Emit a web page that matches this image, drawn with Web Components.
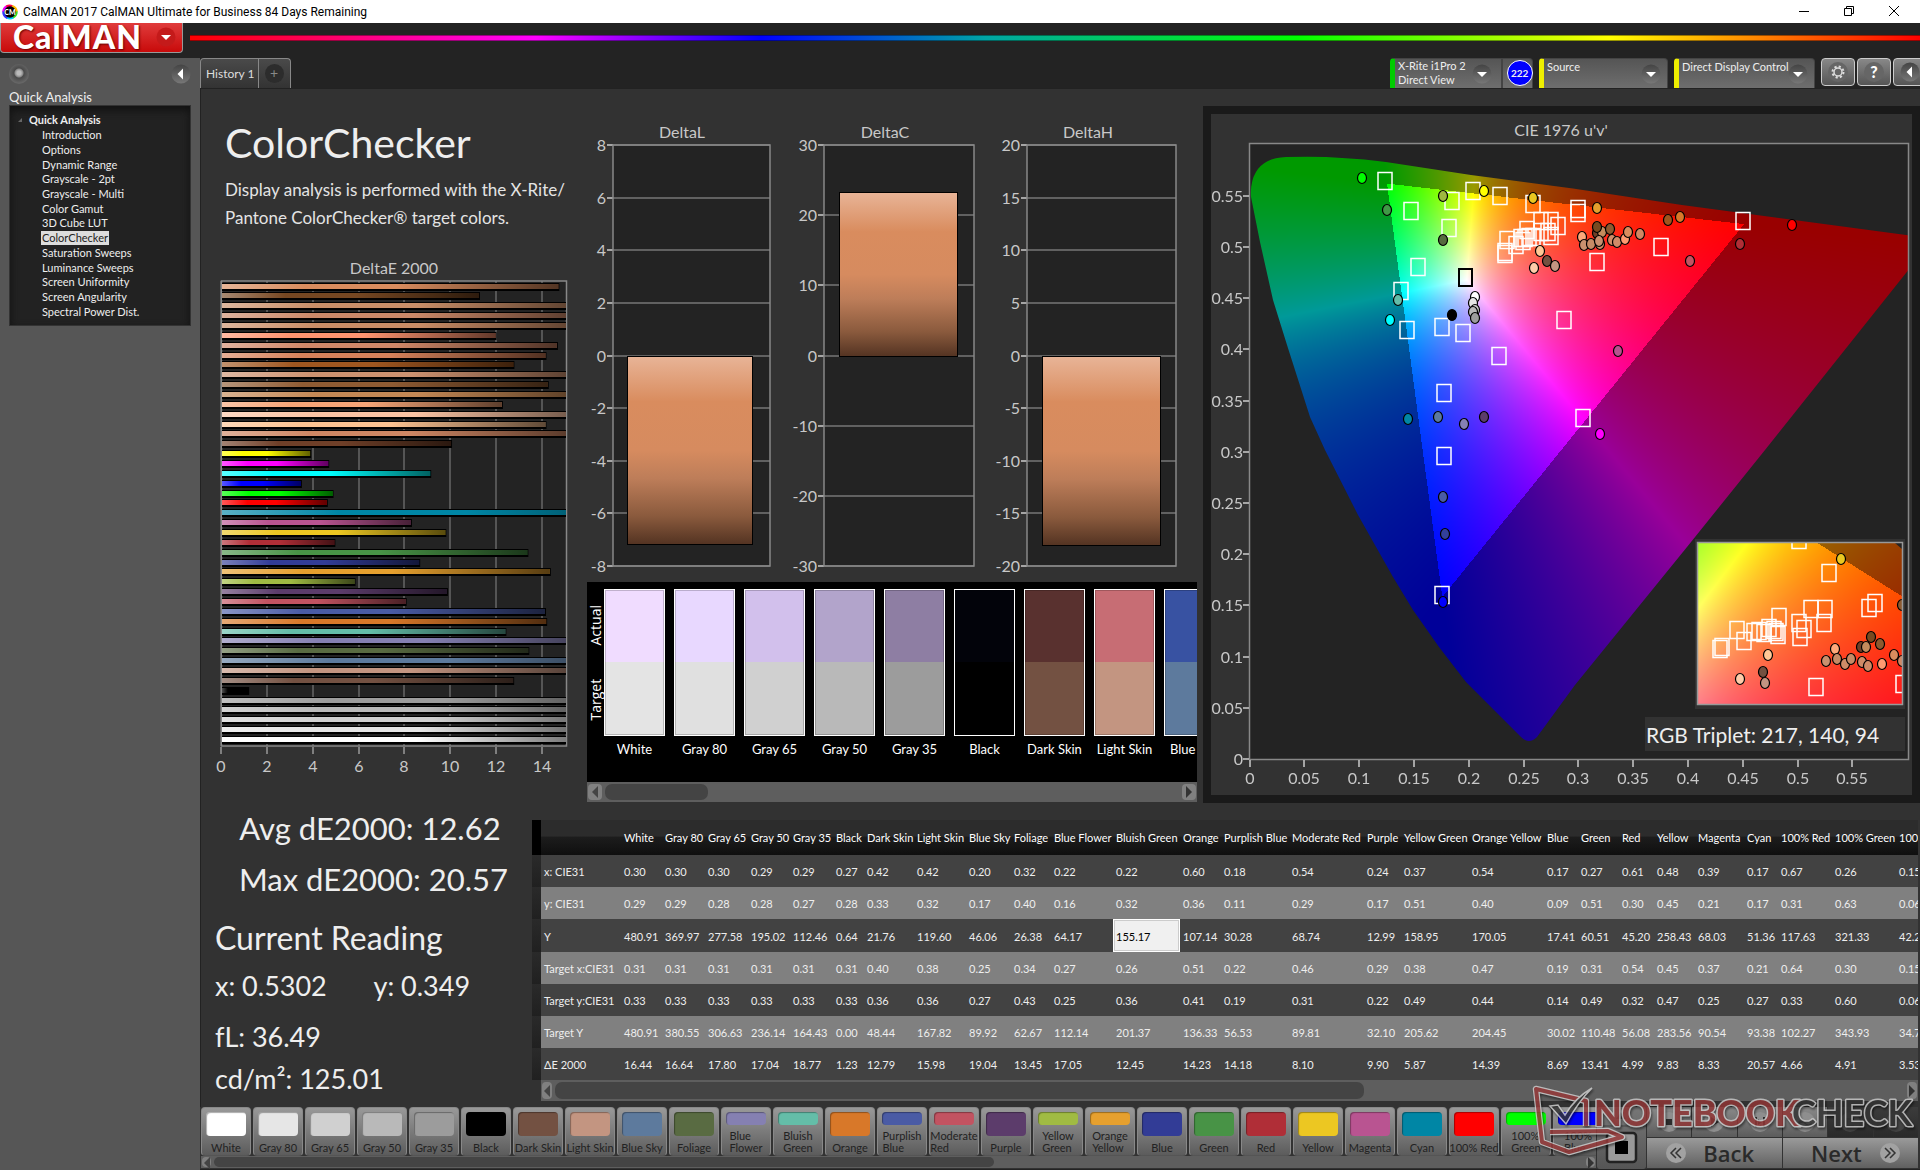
<!DOCTYPE html>
<html lang="en">
<head>
<meta charset="utf-8">
<title>CalMAN 2017</title>
<style>
html,body{margin:0;height:100%;background:#232323;overflow:hidden}
</style>
</head>
<body>
<cal-app></cal-app>
<script>
const FONT = 'Lato,"Open Sans",sans-serif';
const base = `*{box-sizing:border-box}button,select{font:inherit;color:inherit;border:0;padding:0;margin:0;background:none}`;
function define(name, css, html, after) {
  customElements.define(name, class extends HTMLElement {
    connectedCallback() {
      if (this.shadowRoot) return;
      const root = this.attachShadow({mode: 'open'});
      root.innerHTML = `<style>${base}${css}</style>` + (typeof html === 'function' ? html(this) : html);
      if (after) after(root, this);
    }
  });
}

/* Shared patch list: name, colour, x, y, Y, target x, target y, target Y, dE, column width */
const patches = [
  ['White','#ffffff','0.30','0.29','480.91','0.31','0.33','480.91','16.44',41],
  ['Gray 80','#e6e6e6','0.30','0.29','369.97','0.31','0.33','380.55','16.64',43],
  ['Gray 65','#d0d0d0','0.30','0.28','277.58','0.31','0.33','306.63','17.80',43],
  ['Gray 50','#b9b9b9','0.29','0.28','195.02','0.31','0.33','236.14','17.04',42],
  ['Gray 35','#9c9c9c','0.29','0.27','112.46','0.31','0.33','164.43','18.77',43],
  ['Black','#000000','0.27','0.28','0.64','0.31','0.33','0.00','1.23',31],
  ['Dark Skin','#735142','0.42','0.33','21.76','0.40','0.36','48.44','12.79',50],
  ['Light Skin','#c39581','0.42','0.32','119.60','0.38','0.36','167.82','15.98',52],
  ['Blue Sky','#5d7a9d','0.20','0.17','46.06','0.25','0.27','89.92','19.04',45],
  ['Foliage','#596b42','0.32','0.40','26.38','0.34','0.43','62.67','13.45',40],
  ['Blue Flower','#8580b2','0.22','0.16','64.17','0.27','0.25','112.14','17.05',62],
  ['Bluish Green','#64bda8','0.22','0.32','155.17','0.26','0.36','201.37','12.45',67],
  ['Orange','#d87829','0.60','0.36','107.14','0.51','0.41','136.33','14.23',41],
  ['Purplish Blue','#4a5ba5','0.18','0.11','30.28','0.22','0.19','56.53','14.18',68],
  ['Moderate Red','#c25361','0.54','0.29','68.74','0.46','0.31','89.81','8.10',75],
  ['Purple','#5c3c6b','0.24','0.17','12.99','0.29','0.22','32.10','9.90',37],
  ['Yellow Green','#a0bb43','0.37','0.51','158.95','0.38','0.49','205.62','5.87',68],
  ['Orange Yellow','#e6a02e','0.54','0.40','170.05','0.47','0.44','204.45','14.39',75],
  ['Blue','#323c96','0.17','0.09','17.41','0.19','0.14','30.02','8.69',34],
  ['Green','#489346','0.27','0.51','60.51','0.31','0.49','110.48','13.41',41],
  ['Red','#b02e37','0.61','0.30','45.20','0.54','0.32','56.08','4.99',35],
  ['Yellow','#ecc722','0.48','0.45','258.43','0.45','0.47','283.56','9.83',41],
  ['Magenta','#b95491','0.39','0.21','68.03','0.37','0.25','90.54','8.33',49],
  ['Cyan','#0086a5','0.17','0.17','51.36','0.21','0.27','93.38','20.57',34],
  ['100% Red','#ff0000','0.67','0.31','117.63','0.64','0.33','102.27','4.66',54],
  ['100% Green','#00ff00','0.26','0.63','321.33','0.30','0.60','343.93','4.91',64],
  ['100% Blue','#0000ff','0.15','0.06','42.27','0.15','0.06','34.71','3.53',60]
];

define('round-arrow', `:host{display:inline-flex;flex:none;width:20px;height:20px}svg{display:block;width:100%}`,
  el => `<svg viewBox="0 0 20 20"><defs><linearGradient id="g" x2="0" y2="1"><stop stop-color="#444"/><stop offset="1" stop-color="#777"/></linearGradient></defs>
  <circle cx="10" cy="10" r="9.5" fill="${el.getAttribute('fill') || 'url(#g)'}"/><path fill="#fff" d="${el.getAttribute('dir') === 'left' ? 'M12 4.500v11L6.500 10z' : 'M5 8h10l-5 5z'}"/></svg>`);

define('title-bar', `
  :host{display:flex;align-items:center;height:23px;flex:none;background:#fff;color:#000;font:12px/20px Roboto,sans-serif;padding:0 18px 0 2px}
  .t{margin-left:5px;flex:1}svg{display:block}.w{display:flex;gap:29px;padding-bottom:2px}
  button{width:16px;height:16px}`, `
  <svg width="16" height="16" viewBox="0 0 16 16"><g fill="none" stroke-width="3"><path stroke="#e0f" d="M1.700 8A6.300 6.300 0 0 1 5 2.500"/><path stroke="#f04" d="M4.500 2.700a6.300 6.300 0 0 1 6 0"/><path stroke="#fb0" d="M10 2.300A6.300 6.300 0 0 1 14.300 8"/><path stroke="#3d2" d="M14.300 7.500a6.300 6.300 0 0 1-4 5.800"/><path stroke="#0cf" d="M11 13.300a6.300 6.300 0 0 1-6 0"/><path stroke="#33f" d="M5.500 13.500A6.300 6.300 0 0 1 1.700 7.500"/></g><circle cx="8" cy="8" r="5.800"/><text x="8" y="10.500" font-family="Lato" font-weight="900" font-size="7" fill="#fff" text-anchor="middle">CM</text></svg>
  <span class="t">CalMAN 2017 CalMAN Ultimate for Business 84 Days Remaining</span>
  <span class="w"><button aria-label="Minimize"><svg width="16" height="16"><path d="M3 8.500h10" stroke="#000"/></svg></button>
  <button aria-label="Restore"><svg width="16" height="16" fill="none" stroke="#000"><path d="M3.500 5.500h7v7h-7zM5.500 5.500v-2h7v7h-2"/></svg></button>
  <button aria-label="Close"><svg width="16" height="16" fill="none" stroke="#000"><path d="M3 3l10 10M13 3L3 13"/></svg></button></span>`);

define('brand-bar', `
  :host{display:flex;height:35px;flex:none;gap:7px}
  button{width:183px;height:30px;border:1px solid #999;border-top:0;border-radius:0 0 4px 4px;background:linear-gradient(#e03c3c,#c80a0a);display:flex;align-items:center;justify-content:space-between;padding:0 6px 2px 12px;color:#fff;font:900 32px/28px Lato,sans-serif;letter-spacing:1px;text-shadow:1px 1px 2px #600}
  i{flex:1;height:6px;margin-top:12px;background:linear-gradient(90deg,#f00,#f0f 20%,#00f 33%,#00a5a5 46%,#0f0 64%,#ff0 82%,#f00);border:solid #0006;border-width:1px 0}`,
  `<button>CalMAN<round-arrow fill="#c41a1a"></round-arrow></button><i></i>`);

define('device-bar', `
  :host{display:flex;height:30px;font:11px/14px Lato,sans-serif;color:#eee}
  .tabs{display:flex;flex:1;font-size:12px}
  .tabs button{height:30px;border:1px solid #888;border-bottom:0;background:linear-gradient(#4a4a4a,#333);color:#ddd;padding:0 3px 0 5px}
  .tabs button:first-child{border-radius:4px 0 0 0}.tabs button:last-child{border-radius:0 4px 0 0;border-left:0;padding:0 6px;color:#888}
  .tabs i{display:block;width:19px;height:19px;border-radius:50%;background:#2c2c2c;font:14px/18px Lato}
  .dev{display:grid;border-radius:4px 4px 0 0;background:linear-gradient(#555,#6e6e6e);border:1px solid #444;border-width:1px 1px 0;border-left:5px solid #ee0;margin-right:6px}
  .dev>*{grid-area:1/1}.dev round-arrow{justify-self:end;margin:5px 6px 0;pointer-events:none}
  .dev select{appearance:none;align-self:start;height:16px;width:100%;padding:0 0 0 3px;outline:0}
  .src{width:129px}.ddc{width:141px;margin-right:6px}
  .meter{width:143px;display:flex;border-left-color:#0c0}
  .meter button{flex:1;display:flex;text-align:left;padding-left:3px;justify-content:space-between;white-space:nowrap}
  .meter round-arrow{margin-right:9px}
  .meter b{width:37px;border-left:2px solid #444;padding:1px 4px 0}
  .meter b i{display:block;width:26px;height:26px;border-radius:50%;background:#00f;border:1px solid #fff;text-align:center;font:700 10px/24px Lato}
  .ic{display:flex;gap:2px;width:99px;overflow:hidden}.ic button{flex:none;width:34px;height:28px;border:1px solid #ccc;border-radius:4px;background:linear-gradient(#888,#555);display:grid;place-items:center}
  .ic svg{display:block}`, `
  <div class="tabs"><button>History 1</button><button aria-label="Add tab"><i>+</i></button></div>
  <div class="dev meter"><button><span>X-Rite i1Pro 2<br>Direct View</span><round-arrow></round-arrow></button><b><i>222</i></b></div>
  <div class="dev src"><select aria-label="Source"><option>Source</option></select><round-arrow></round-arrow></div>
  <div class="dev ddc"><select aria-label="Direct Display Control"><option>Direct Display Control</option></select><round-arrow></round-arrow></div>
  <div class="ic"><button aria-label="Settings"><svg width="20" height="20" viewBox="0 0 20 20"><circle cx="10" cy="10" r="10" fill="#666"/><g fill="none" stroke="#ddd"><circle cx="10" cy="10" r="4" stroke-width="1.500"/><circle cx="10" cy="10" r="5.500" stroke-width="2" stroke-dasharray="2.200 2.120"/></g></svg></button>
  <button aria-label="Help"><svg width="20" height="20" viewBox="0 0 20 20"><circle cx="10" cy="10" r="10" fill="#666"/><text x="10" y="15.500" text-anchor="middle" font-family="Lato" font-weight="900" font-size="16" fill="#fff">?</text></svg></button>
  <button aria-label="Collapse"><round-arrow dir="left"></round-arrow></button></div>`);

define('workflow-tree', `
  :host{display:block;width:200px;flex:none;background:#565656;color:#eee;font:11px/14px Lato,sans-serif;padding:6px 9px 0}
  .top{display:flex;justify-content:space-between;height:20px;margin-bottom:5px}
  .dot{width:20px;height:20px;border-radius:50%;background:radial-gradient(circle at 50% 45%,#bbb 0 2px,#888 4px,#4a4a4a 5px,#666 10px)}
  h2{font:13px/16px Lato,sans-serif;margin:0}
  nav{height:221px;background:#222;border:1px solid #333;box-shadow:inset 0 4px 8px #111;padding:7px 0 6px 19px;display:flex;flex-direction:column}
  b{flex:1;display:flex;align-items:center}b svg{margin:0 7px 0 -11px}a{flex:1;color:inherit;text-decoration:none;padding-left:13px;display:flex;align-items:center}
  a[aria-current] span{background:#ddd;color:#222;margin-left:-1px;padding:0 1px}`, `
  <div class="top"><span class="dot"></span><button aria-label="Collapse panel"><round-arrow dir="left"></round-arrow></button></div>
  <h2>Quick Analysis</h2>
  <nav><b><svg width="4" height="4"><path d="M4 0v4H0z" fill="#666"/></svg>Quick Analysis</b>${['Introduction','Options','Dynamic Range','Grayscale - 2pt','Grayscale - Multi','Color Gamut','3D Cube LUT','ColorChecker','Saturation Sweeps','Luminance Sweeps','Screen Uniformity','Screen Angularity','Spectral Power Dist.'].map(t => `<a href="#"${t === 'ColorChecker' ? ' aria-current="page"' : ''}><span>${t}</span></a>`).join('')}</nav>`);

define('deltae-chart', `:host{display:block;font:16px ${FONT}}svg{display:block;width:100%}text{fill:#c8c8c8;text-anchor:middle}`, () => {
  const bars = [['#d98c5e',14.76],['#764722',11.3],['#c98e68',16.4],['#cb8868',16.2],['#c98c66',16.6],['#ff9470',12.02],['#d08768',14.7],['#d6815a',14.2],['#9f5620',12.8],['#cd9270',16],['#8f5b33',14.3],['#c48855',16.5],['#f6a577',12.3],['#fbc4a4',16.3],['#fdc392',14.2],['#cf8764',15.8],['#6f3f28',10.08],['#ffff00',3.93],['#ff00ff',4.72],['#00ffff',9.17],['#0000ff',3.53],['#00ff00',4.91],['#ff0000',4.66],['#0086a5',20.57],['#b95491',8.33],['#ecc722',9.83],['#b02e37',4.99],['#489346',13.41],['#323c96',8.69],['#e6a02e',14.39],['#a0bb43',5.87],['#5c3c6b',9.9],['#c25361',8.1],['#4a5ba5',14.18],['#d87829',14.23],['#64bda8',12.45],['#8580b2',17.05],['#596b42',13.45],['#5d7a9d',19.04],['#c39581',15.98],['#735142',12.79],['#000000',1.23],['#9c9c9c',18.77],['#b9b9b9',17.04],['#d0d0d0',17.8],['#e6e6e6',16.64],['#ffffff',16.44]];
  let s = `<svg viewBox="201 255 386 530"><defs><linearGradient id="s"><stop stop-color="#fff" stop-opacity=".36"/><stop offset=".25" stop-color="#fff" stop-opacity="0"/><stop offset=".26" stop-opacity="0"/><stop offset=".52" stop-opacity="0"/><stop offset="1" stop-opacity=".62"/></linearGradient><clipPath id="c"><rect x="222" y="281" width="344" height="465"/></clipPath></defs>
  <text x="394" y="274">DeltaE 2000</text><rect x="221.500" y="281" width="345" height="465" fill="#232323" stroke="#888" stroke-width="1.500"/>`;
  for (let v = 0; v < 15; v += 2) { const x = Math.round(221 + v * 22.92); s += `<path d="M${x} 281v465" stroke="#888"/><path d="M${x} 747v7" stroke="#ccc"/><text x="${x}" y="772">${v}</text>`; }
  s += '<g clip-path="url(#c)">';
  bars.forEach(([c, v], i) => { const y = Math.round(282.5 + i * 9.86), w = v * 22.92; s += `<rect x="221" y="${y}" width="${w}" height="8"/><rect x="221" y="${y + 1}" width="${w - 1}" height="5" fill="${c}"/><rect x="221" y="${y + 1}" width="${w - 1}" height="5" fill="url(#s)"/>`; });
  return s + '</g></svg>';
});

define('delta-charts', `:host{display:block;font:16px ${FONT}}svg{display:block;width:100%}text{fill:#c8c8c8}`, () => {
  let s = '<svg viewBox="587 106 616 476"><defs><linearGradient id="b" x2="0" y2="1"><stop stop-color="#e8b497"/><stop offset=".24" stop-color="#d98c5e"/><stop offset=".5" stop-color="#d68b5f"/><stop offset=".65" stop-color="#bd7d59"/><stop offset=".85" stop-color="#8a5a3d"/><stop offset="1" stop-color="#533322"/></linearGradient></defs>';
  [['DeltaL', 613, 770, 8, 2, 627, 126, 356, 189], ['DeltaC', 824, 974, 30, 10, 839, 119, 192, 165], ['DeltaH', 1027, 1176, 20, 5, 1042, 119, 356, 190]].forEach(([t, x0, x1, m, st, bx, bw, by, bh]) => {
    s += `<text x="${t === 'DeltaL' ? 682 : t === 'DeltaC' ? 885 : 1088}" y="138" text-anchor="middle">${t}</text><rect x="${x0}" y="145" width="${x1 - x0}" height="421" fill="#232323"/>`;
    for (let v = m; v >= -m; v -= st) { const y = Math.round(145 + (m - v) * 210.5 / m); s += `<path d="M${x0} ${y}H${x1}" stroke="#777" stroke-width="1.500"/><path d="M${x0 - 6} ${y}h6" stroke="#ccc" stroke-width="1.500"/><text x="${x0 - 7}" y="${y + 6}" text-anchor="end">${v}</text>`; }
    s += `<path d="M${x0} 145H${x1}V566H${x0}z" fill="none" stroke="#888" stroke-width="1.500"/><rect x="${bx + .5}" y="${by + .5}" width="${bw - 1}" height="${bh - 1}" fill="url(#b)" stroke="#000"/>`;
  });
  return s + '</svg>';
});

define('scroll-strip', `
  :host{display:flex;align-items:stretch;background:#5e5e5e;padding:2px 1px;height:20px;flex:none}
  button{width:var(--b,14px);border-radius:4px;background:#808080;display:grid;place-items:center}svg{display:block}
  .track{flex:1;margin:0 3px}.thumb{height:100%;border-radius:7px;background:#444}`,
  el => `<button aria-label="Scroll left"><svg width="6" height="12"><path d="M6 0v12L0 6z" fill="#444"/></svg></button><div class="track"><div class="thumb" style="width:${el.getAttribute('thumb')}"></div></div><button aria-label="Scroll right"><svg width="6" height="12"><path d="M0 0v12l6-6z" fill="#333"/></svg></button>`);

define('swatch-strip', `
  :host{display:flex;flex-direction:column;margin-right:6px;color:#fff;font:13px/20px ${FONT}}
  .view{display:flex;height:200px;background:#000;overflow:hidden;padding-top:7px}
  .side{width:17px;flex:none;height:147px;display:flex;flex-direction:column;font:500 14px/17px "Open Sans",sans-serif}
  .side span{flex:1;writing-mode:vertical-rl;rotate:180deg;text-align:center}
  figure{margin:0 9px 0 0;width:61px;flex:none;text-align:center;white-space:nowrap}
  figure div{height:147px;border:1px solid #fff;margin-bottom:3px;box-shadow:inset 0 0 0 1px #0003}`,
  () => { const act = ['#f0dcff','#e8d8ff','#d2c0ec','#b2a4cb','#8e7ea3','#02030a','#59312f','#c76d74','#3852a2']; const tgt = ['#e4e4e4','#e0e0e0','#d0d0d0','#b9b9b9','#9c9c9c','#000','#735142','#c39581','#5d7a9d'];
  return `<div class="view"><div class="side"><span>Actual</span><span>Target</span></div>${act.map((a, i) => `<figure><div style="background:linear-gradient(${a} 50%,${tgt[i]} 50%)"></div><figcaption>${patches[i][0]}</figcaption></figure>`).join('')}</div><scroll-strip thumb="18%"></scroll-strip>`; });

/* Chromaticity colouring shared by the main diagram and its magnifier */
function rgbOf(x, y) {
  const X = x / y, Z = (1 - x - y) / y;
  const c = [3.2406 * X - 1.5372 - .4986 * Z, -.9689 * X + 1.8758 + .0415 * Z, .0557 * X - .204 + 1.057 * Z];
  const inside = Math.min(...c) >= 0, m = Math.max(...c), k = inside ? 255 : 153;
  return c.map(v => Math.max(0, v) / m * k);
}
function paint(canvas, toXY, clip) {
  const w = canvas.width, h = canvas.height, tmp = document.createElement('canvas');
  tmp.width = w; tmp.height = h;
  const t = tmp.getContext('2d'), img = t.createImageData(w, h);
  for (let j = 0, p = 0; j < h; j++) for (let i = 0; i < w; i++, p += 4) {
    const [x, y] = toXY(i, j), c = rgbOf(x, y);
    img.data[p] = c[0]; img.data[p + 1] = c[1]; img.data[p + 2] = c[2]; img.data[p + 3] = 255;
  }
  t.putImageData(img, 0, 0);
  const g = canvas.getContext('2d');
  if (clip) g.clip(new Path2D(clip));
  g.drawImage(tmp, 0, 0);
}

define('cie-chart', `
  :host{display:block;border:8px solid #1a1a1a;background:#323232;font:16px ${FONT}}
  svg{display:block;width:100%}canvas{display:block}text{fill:#c8c8c8}`, () => {
  const X = x => Math.round(1200 + x / 2.178), Y = y => Math.round(100 + y / 3), Y7 = y => Math.round(450 + y / 3);
  const sq = (x, y) => `<rect x="${x - 7}" y="${y - 8.5}" width="14" height="17"/>`;
  const el = (x, y, c) => `<ellipse cx="${x}" cy="${y}" rx="4.500" ry="5.500" fill="${c}"/>`;
  const squares = [[404,243],[459,334],[548,304],[594,272],[654,289],[543,385],[725,313],[823,328],[823,340],[475,502],[437,574],[450,691],[527,681],[572,700],[652,768],[792,661],[865,487],[1003,442],[1183,364],[532,880],[835,955],[532,1068],[527,1486]].map(p => sq(X(p[0]), Y(p[1]))).join('')
   + [[75,187],[75,191],[80,150],[108,166],[140,121],[122,145],[135,144],[148,142],[160,142],[128,152],[183,94],[214,92],[235,109],[205,126],[214,139],[182,127]].map(p => sq(Math.round(1480 + p[0] / 3), Math.round(190 + p[1] / 3))).join('');
  const dots = [[352,234,'#0f0'],[407,329,'#3f9a46'],[529,288,'#9fb840'],[618,272,'#ff0'],[725,294,'#ebc820'],[865,324,'#e5a02d'],[529,420,'#566b3e'],[1019,359,'#a0551e'],[1045,351,'#d97829'],[1290,375,'#f00'],[1177,432,'#b02e36'],[1067,483,'#c35363'],[740,452,'#ffc896'],[755,483,'#735040'],[774,498,'#c39582'],[728,504,'#ffccaa'],[431,600,'#63bda9'],[414,660,'#0ff'],[600,592,'#fff'],[594,609,'#e5e5e5'],[600,630,'#ccc'],[595,636,'#b8b8b8'],[600,655,'#9c9c9c'],[549,645,'#000'],[911,753,'#b7528f'],[453,957,'#0086a5'],[518,951,'#5c7a9e'],[575,972,'#8580b3'],[618,951,'#5c3c6b'],[871,1002,'#f0f'],[529,1192,'#4a5ba5'],[533,1302,'#33409a'],[529,1505,'#00f']].map(p => el(X(p[0]), Y(p[1]), p[2])).join('')
   + [[350,130,'#6f3f28'],[306,141,'#ffa87a'],[365,127,'#c48b5c'],[352,112,'#784a20'],[390,116,'#8c5a30'],[311,166,'#c9916f'],[332,161,'#c68b66'],[360,163,'#d08c68'],[357,152,'#c99070'],[396,150,'#cf8c68'],[411,156,'#cf8b68'],[436,147,'#ff9a70'],[444,126,'#d98c5e'],[480,132,'#d08764']].map(p => el(Math.round(1480 + p[0] / 3), Math.round(190 + p[1] / 3), p[2])).join('');
  const isq = [[1304,270],[1371,368],[1470,458],[1457,474],[1330,478],[1362,478],[1360,519],[1304,519],[1316,536],[1307,560],[1262,500],[1250,540],[1240,535],[1255,546],[1228,550],[1218,542],[1206,545],[1170,540],[1185,574],[1136,592],[1133,596],[1258,554],[1342,712],[1531,703]].map(p => sq(X(p[0]), Y7(p[1]))).join('');
  const idot = [[1396,327,'#ebc820'],[1530,464,'#8c5a30'],[1461,560,'#784a20'],[1482,581,'#8c5a30'],[1439,591,'#6f3f28'],[1451,591,'#c48b5c'],[1384,597,'#ffa87a'],[1363,632,'#c9916f'],[1387,628,'#c68b66'],[1405,643,'#cf8c68'],[1418,628,'#c68b66'],[1441,636,'#cf8c68'],[1455,648,'#d08c68'],[1485,642,'#ff9a70'],[1512,615,'#d98c5e'],[1530,632,'#d08764'],[1237,614,'#ffc896'],[1226,665,'#735040'],[1231,699,'#c39582'],[1176,687,'#ffccaa']].map(p => el(X(p[0]), Y7(p[1]), p[2])).join('');
  let ax = '';
  for (let i = 0; i <= 11; i++) {
    const x = Math.round(1249.5 + i * 54.8), y = Math.round(759 - i * 51.2), l = String(i * 5 / 100);
    ax += `<path d="M${x} 760v7M${1243} ${y}h6" stroke="#ccc" stroke-width="1.500"/><text x="${x}" y="784" text-anchor="middle">${l}</text><text x="1243" y="${y + 6}" text-anchor="end">${l}</text>`;
  }
  return `<svg viewBox="1211 114 701 681"><defs><clipPath id="i"><rect x="1698" y="543" width="204" height="161"/></clipPath></defs>
  <text x="1561" y="136" text-anchor="middle">CIE 1976 u'v'</text>
  <rect x="1250" y="144" width="658" height="615" fill="#232323"/>
  <foreignObject x="1250" y="144" width="658" height="614"><canvas id="main" width="658" height="614"></canvas></foreignObject>
  <rect x="1249.500" y="143.500" width="659" height="616" fill="none" stroke="#888" stroke-width="1.500"/>${ax}
  <g fill="none" stroke="#fff" stroke-width="1.500">${squares}<rect x="1459" y="269" width="13" height="17" stroke="#000" stroke-width="2"/></g>
  <g stroke="#000" stroke-width="1.200">${dots}</g>
  <rect x="1695" y="539" width="210" height="170" fill="#323232"/>
  <foreignObject x="1698" y="543" width="204" height="161"><canvas id="zoom" width="204" height="161"></canvas></foreignObject>
  <g clip-path="url(#i)"><path d="M1895 543h7v6z" fill="#232323"/><g fill="none" stroke="#fff" stroke-width="1.500">${isq}</g><g stroke="#000" stroke-width="1.200">${idot}</g></g>
  <rect x="1697.500" y="542.500" width="205" height="162" fill="none" stroke="#999" stroke-width="1.500"/>
  <rect x="1645" y="717" width="260" height="34" fill="#323232"/><text x="1646" y="743" font-size="21" style="fill:#eee">RGB Triplet: 217, 140, 94</text></svg>`;
}, root => {
  const locus = 'M1286 157Q1320 156 1342 158Q1365 159 1386 162L1471 175L1573 188.500L1682 205L1910 235.500L1910 268L1765 450L1687 547L1575 685L1537 737Q1529 745 1521 737L1494 710L1466 682L1439 647L1413 610L1393 577L1358 515L1325 450L1310 417L1287 345L1273 300L1260 242L1251 197Q1250 182 1256 172Q1264 158 1286 157z'
    .replace(/(-?[\d.]+) (-?[\d.]+)/g, (m, a, b) => `${a - 1250} ${b - 144}`);
  paint(root.getElementById('main'), (i, j) => { const u = (i + .5) / 1096, v = (614 - j) / 1022, d = 6 * u - 16 * v + 12; return [9 * u / d, Math.max(.001, 4 * v / d)]; }, locus);
  paint(root.getElementById('zoom'), (i, j) => [.456 + (i - 119.5) / 1300, .476 - j / 1032]);
});

define('reading-panel', `
  :host{display:block;color:#eee;font:27px/42px ${FONT};padding-left:14px;white-space:nowrap}
  p{margin:0}.big{font-size:31px;line-height:51px;width:262px;text-align:center;margin-left:24px}
  h2{font:32px/66px ${FONT};margin:0}.xy{display:flex;line-height:30px;margin-bottom:15px}.xy span{width:161px}`,
  `<p class="big">Avg dE2000: 12.62</p><p class="big">Max dE2000: 20.57</p><h2>Current Reading</h2><p class="xy"><span>x: 0.5302</span><span>y: 0.349</span></p><p>fL: 36.49</p><p>cd/m²: 125.01</p>`);

define('data-grid', `
  :host{display:block;margin:17px 2px 0 0;overflow:hidden;min-width:0;color:#eee;font:11px/20px ${FONT}}
  .view{overflow:hidden}table{border-collapse:collapse;table-layout:fixed}
  th,td{text-align:left;font-weight:400;padding:2px 0 0 3px;height:32px;white-space:nowrap}
  tbody tr:nth-child(3) td{height:33px}
  thead th{height:35px;padding-top:0;color:#fff}thead tr{background:linear-gradient(#2c2c2c 45%,#1c1c1c 50%,#0f0f0f)}
  tbody tr{background:#424242}tbody tr:nth-child(even){background:#808080}
  td:first-child,thead td{background:linear-gradient(#2a2a2a,#202020)}thead td{background:#000!important}
  .sel{background:#f0f0f0;color:#000;box-shadow:inset 0 0 0 1px #fff,inset 0 0 0 2px #ccc}
  scroll-strip{margin-left:9px;height:21px;--b:10px}`, () => {
  const rows = ['x: CIE31', 'y: CIE31', 'Y', 'Target x:CIE31', 'Target y:CIE31', 'Target Y', 'ΔE 2000'];
  const w = 89 + patches.reduce((a, p) => a + p[9], 0);
  return `<div class="view"><table style="width:${w}px"><colgroup><col style="width:9px"><col style="width:80px">${patches.map(p => `<col style="width:${p[9]}px">`).join('')}</colgroup>
  <thead><tr><td></td><th></th>${patches.map(p => `<th scope="col">${p[0]}</th>`).join('')}</tr></thead>
  <tbody>${rows.map((r, i) => `<tr><td></td><th scope="row">${r}</th>${patches.map(p => `<td${i === 2 && p[0] === 'Bluish Green' ? ' class="sel"' : ''}>${p[i + 2]}</td>`).join('')}</tr>`).join('')}</tbody></table></div><scroll-strip thumb="60%"></scroll-strip>`;
});

define('patch-bar', `
  :host{display:flex;flex-direction:column;flex:1;min-width:0;font:11px/12px Lato,sans-serif;color:#222}
  .row{display:flex;gap:2px;overflow:hidden;height:49px}
  button{flex:none;width:50px;height:49px;border-radius:4px;background:linear-gradient(#999,#5c5c5c);border:1px solid #888;border-bottom-color:#555;display:flex;flex-direction:column;align-items:center;padding:4px 0 1px}
  i{width:40px;flex:1;border-radius:4px;box-shadow:inset 1px 1px 1px #0005;margin-bottom:6px}span{display:block;text-align:left;white-space:nowrap}
  .two i{margin-bottom:5px}scroll-strip{height:12px;--b:9px;padding:1px}`,
  () => `<div class="row">${patches.map(p => { const two = /^(Blue F|Bluish|Purplish|Moderate|Yellow G|Orange Y|100% [GB])/.test(p[0]); return `<button class="${two ? 'two' : ''}"><i style="background:${p[1]}"></i><span>${two ? p[0].replace(' ', '<br>') : p[0]}</span></button>`; }).join('')}</div><scroll-strip thumb="57%"></scroll-strip>`);

define('transport-controls', `
  :host{display:flex;gap:1px;width:321px;flex:none;margin-right:2px;color:#2a2a2a}
  .pat{width:49px;background:linear-gradient(#777,#555);border-radius:3px;display:flex;flex-direction:column;align-items:center}
  .pat button{display:block}.pat svg{display:block}
  .right{flex:1;display:grid;grid-template:30px 30px/repeat(6,1fr);gap:1px}
  .right button{background:linear-gradient(#8a8a8a,#5c5c5c);display:grid;place-items:center}
  .right button.off{background:linear-gradient(#3c3c3c,#2a2a2a)}
  .right .nav{grid-column:span 3;background:linear-gradient(#9a9a9a,#606060);display:flex;align-items:center;justify-content:space-between;padding:0 18px 0 19px;font:600 22px/30px "Open Sans",sans-serif}
  .nav.b{padding-right:28px}.nav.n{padding-left:28px}svg{display:block}`, () => {
  const ic = ['M7 7h6v6H7z', 'M7 5l8 5-8 5z', 'M5 5h2v10H5zM13 5h2v10h-2zM8 7l4 3-4 3z', 'M3 10q3.500-5 7 0t7 0l-1 3q-3 2-6-1-3-3-6 1z', 'M6 6h8v2H8v5h6v2H6z', 'M9 5h2v10H9z'];
  const ch = d => `<svg width="20" height="20" viewBox="0 0 20 20"><circle cx="10" cy="10" r="10" fill="#a2a2a2"/><path d="${d}" fill="none" stroke="#333" stroke-width="1.500"/></svg>`;
  return `<div class="pat"><button aria-label="Expand"><svg width="49" height="20"><path d="M0 19h49" stroke="#444"/><circle cx="24" cy="10" r="8" fill="#777"/><path d="M24 5l5 7H19z" fill="#444"/></svg></button>
  <button aria-label="Pattern window"><svg width="33" height="41"><rect x="2" y="6" width="29" height="29" rx="3" fill="#999" stroke="#222" stroke-width="2.500"/><rect x="10" y="14" width="13" height="13"/></svg></button></div>
  <div class="right">${ic.map((d, i) => `<button aria-label="Control ${i + 1}" class="${i > 3 ? 'off' : ''}"><svg width="20" height="20" viewBox="0 0 20 20"><circle cx="10" cy="10" r="10" fill="${i > 3 ? '#444' : '#8e8e8e'}"/><path d="${d}" fill="#2c2c2c"/></svg></button>`).join('')}
  <button class="nav b">${ch('M10 5l-5 5 5 5M15 5l-5 5 5 5')}Back</button><button class="nav n">Next${ch('M5 5l5 5-5 5M10 5l5 5-5 5')}</button></div>`;
});

define('water-mark', `:host{position:fixed;right:0;bottom:0;width:400px;height:90px;pointer-events:none;opacity:.85}svg{display:block;filter:drop-shadow(1px 2px 1px #0008)}text{font-family:Lato,sans-serif;font-size:36px;stroke:#c8c8c8;stroke-width:3px;paint-order:stroke;stroke-linejoin:round}`, `
  <svg width="400" height="90" viewBox="0 0 400 90"><g fill="none" stroke-linejoin="round"><g stroke="#ccc" stroke-width="6.500"><path d="M66 46V21L16 9l6 53 27 10 53-15-14-6-58 1"/></g><g stroke="#963a3a" stroke-width="4"><path d="M66 46V21L16 9l6 53 27 10 53-15-14-6-58 1"/></g></g>
  <path d="M30 26l8-1 7 10Q55 18 72 8 58 22 46 44z" fill="#333" stroke="#ccc" stroke-width="1.500"/>
  <text x="74" y="46" font-weight="900" fill="#8f3535">NOTEBOOK</text><text x="272" y="46" font-weight="700" fill="#333">CHECK</text></svg>`);

define('cal-app', `
  :host{display:flex;flex-direction:column;height:100vh;background:#232323}
  .body{display:flex;flex:1;min-height:0}.work{flex:1;min-width:0;display:flex;flex-direction:column}
  main{flex:1;background:#323232;border-left:1px solid #222;border-top:1px solid #222;min-height:0}
  .top{display:grid;grid-template-columns:386px 616px 1fr;align-items:start}
  .top cie-chart,.mid{margin-top:17px}
  .bottom{display:grid;grid-template-columns:331px 1fr;height:301px}
  h1{font:41px/60px ${FONT};color:#eee;margin:24px 0 3px 24px}
  .desc{font:17px/28px ${FONT};color:#e4e4e4;margin:0 0 23px 24px;white-space:nowrap}
  footer{display:flex;gap:1px;height:62px;padding-left:1px;background:#323232;flex:none;margin-bottom:1px}`, `
  <title-bar></title-bar><brand-bar></brand-bar>
  <div class="body"><workflow-tree></workflow-tree><div class="work"><device-bar></device-bar>
  <main><div class="top"><section><h1>ColorChecker</h1><p class="desc">Display analysis is performed with the X-Rite/<br>Pantone ColorChecker® target colors.</p><deltae-chart></deltae-chart></section>
  <section class="mid"><delta-charts></delta-charts><swatch-strip></swatch-strip></section><cie-chart></cie-chart></div>
  <div class="bottom"><reading-panel></reading-panel><data-grid></data-grid></div></main>
  <footer><patch-bar></patch-bar><transport-controls></transport-controls></footer></div></div><water-mark></water-mark>`);
</script>
</body>
</html>
